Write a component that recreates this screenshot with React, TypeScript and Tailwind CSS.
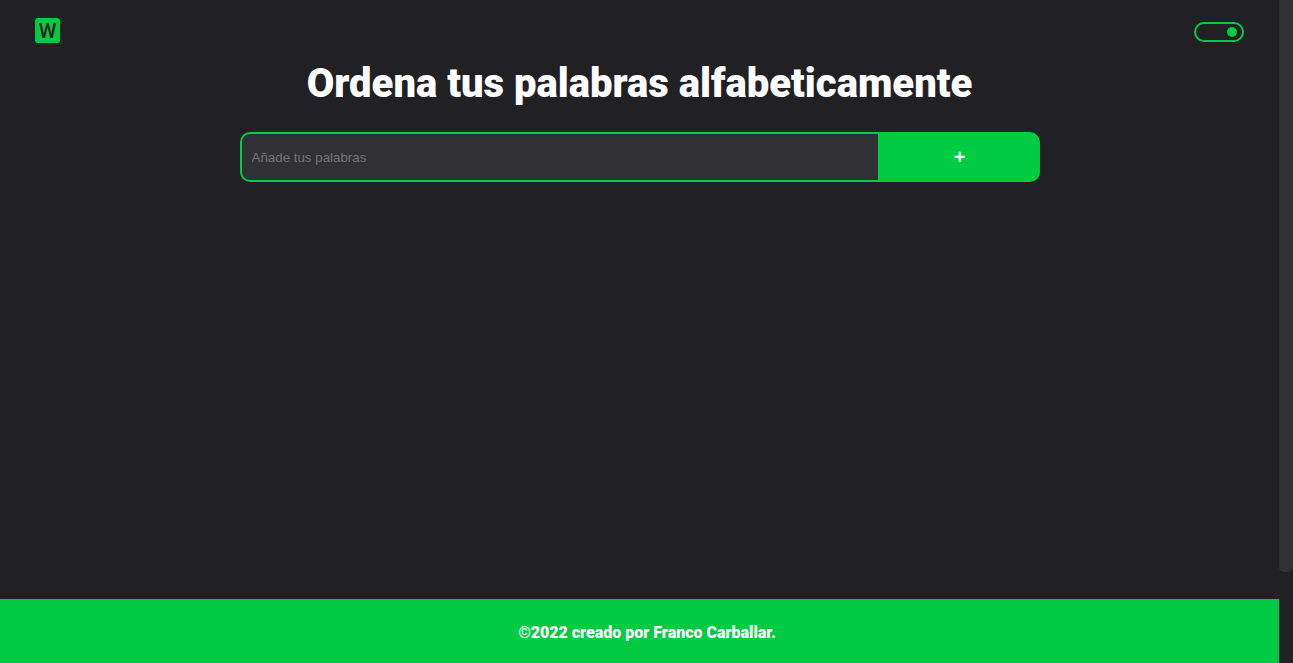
export default function App() {
  return (
    <div className="flex h-[663px] w-full overflow-hidden bg-[#212025] font-['Roboto',sans-serif] text-white">
      <div className="flex flex-1 flex-col">
        <header className="flex h-[60px] items-center justify-between px-[35px]">
          <div className="mt-px flex size-[25px] items-center justify-center rounded-[3px] bg-[#00cb43] pt-px text-xl leading-none font-medium text-[#212025]">W</div>
          <button aria-label="Tema" className="mt-1 flex h-5 w-[50px] items-center justify-end rounded-full border-2 border-[#00cb43] pr-[5px]">
            <span className="size-[10px] rounded-full bg-[#00cb43]" />
          </button>
        </header>
        <main className="flex flex-1 flex-col items-center">
          <h1 className="text-[40px] leading-[47px] font-black">Ordena tus palabras alfabeticamente</h1>
          <form className="mt-[25px] flex h-[50px] w-[800px]">
            <input placeholder="Añade tus palabras" className="w-[640px] rounded-l-[10px] border-2 border-[#00cb43] bg-[#313035] px-[10px] pt-0.5 font-['Liberation_Sans',sans-serif] text-[13.333px] placeholder:text-[#757575]" />
            <button type="button" className="w-[160px] rounded-r-[10px] bg-[#00cb43] font-['Liberation_Sans',sans-serif] text-xl font-bold">+</button>
          </form>
        </main>
        <footer className="flex h-16 items-center justify-center bg-[#00cb43] pt-[3px] pl-[15px] font-black">©2022 creado por Franco Carballar.</footer>
      </div>
      <div className="w-[14px] bg-[#212025]">
        <div className="h-[572px] rounded-b-[5px] bg-[#313035]" />
      </div>
    </div>
  );
}
